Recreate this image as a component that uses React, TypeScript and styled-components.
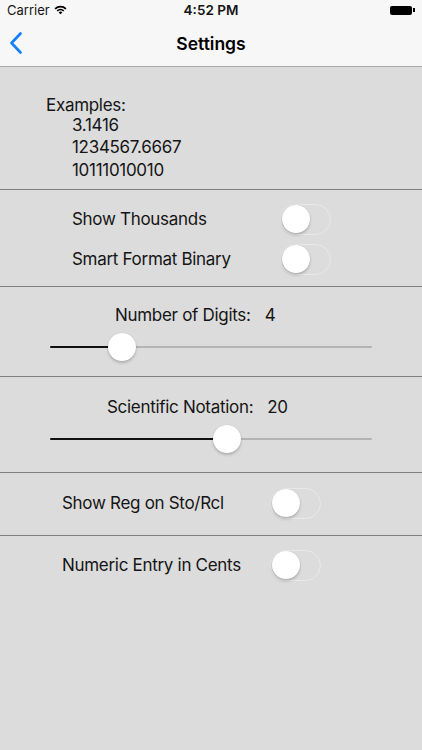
import React from "react";
import styled, { createGlobalStyle } from "styled-components";

const GlobalStyle = createGlobalStyle`
  html, body {
    margin: 0;
    padding: 0;
    background: #dcdcdc;
  }
  body {
    font-family: Inter, "Liberation Sans", sans-serif;
    color: #151515;
  }
`;

const Screen = styled.div`
  width: 422px;
  height: 750px;
  background: #dcdcdc;
  display: flex;
  flex-direction: column;
  overflow: hidden;
  letter-spacing: -0.3px;
`;

const Header = styled.div`
  background: #f7f7f7;
  border-bottom: 1px solid #a9a9a9;
  display: flex;
  flex-direction: column;
  letter-spacing: 0;
`;

const StatusBar = styled.div`
  height: 20px;
  display: grid;
  grid-template-columns: 1fr auto 1fr;
  align-items: center;
  padding: 0 7px;
  font-size: 13px;
`;

const Carrier = styled.div`
  display: flex;
  align-items: center;
  gap: 4px;
`;

const Clock = styled.div`
  font-weight: 600;
  font-size: 13.5px;
`;

const Battery = styled.div`
  justify-self: end;
  display: flex;
  align-items: center;
`;

const BatteryBody = styled.div`
  width: 22px;
  height: 9px;
  background: #000;
  border-radius: 2px;
`;

const BatteryTip = styled.div`
  width: 2px;
  height: 4px;
  background: #000;
  margin-left: 1px;
`;

const NavBar = styled.div`
  height: 46px;
  display: grid;
  grid-template-columns: 60px 1fr 60px;
  align-items: center;
`;

const Back = styled.div`
  padding-left: 9px;
  display: flex;
  align-items: center;
`;

const Title = styled.div`
  text-align: center;
  font-size: 17.5px;
  font-weight: 600;
  color: #000;
`;

const Section = styled.div<{ h: number }>`
  height: ${(p) => p.h}px;
  border-bottom: 1px solid #7e7e7e;
  box-sizing: border-box;
  display: flex;
  flex-direction: column;
`;

const Examples = styled.div`
  padding: 27px 0 0 46px;
  font-size: 17px;
  line-height: 22.5px;
`;

const ExampleLine = styled.div`
  padding-left: 26px;
`;

const Row = styled.div<{ indent: number; toggleAt: number }>`
  height: 40px;
  display: grid;
  grid-template-columns: ${(p) => p.toggleAt - p.indent}px 51px;
  align-items: center;
  padding-left: ${(p) => p.indent}px;
  font-size: 17px;
`;

const ToggleTrack = styled.div`
  width: 51px;
  height: 31px;
  box-sizing: border-box;
  border: 1.5px solid #e9e9e9;
  border-radius: 16px;
  display: flex;
  align-items: center;
  padding-left: 0.5px;
  margin-left: -1px;
`;

const Knob = styled.div`
  width: 28px;
  height: 28px;
  border-radius: 50%;
  background: #fff;
  box-shadow: 0 2px 3px rgba(0, 0, 0, 0.2), 0 0 1px rgba(0, 0, 0, 0.15);
`;

const SliderBlock = styled.div`
  display: flex;
  flex-direction: column;
  padding-left: 50px;
  font-size: 17px;
`;

const SliderLabel = styled.div<{ indent: number }>`
  height: 20px;
  line-height: 20px;
  display: flex;
  gap: 14px;
  padding-left: ${(p) => p.indent}px;
`;

const SliderTrack = styled.div`
  position: relative;
  width: 322px;
  height: 2px;
  background: #b4b4b4;
  border-radius: 1px;
`;

const SliderFill = styled.div`
  height: 2px;
  background: #111;
  border-radius: 1px;
`;

const SliderKnob = styled(Knob)`
  position: absolute;
  top: -13px;
  transform: translateX(-14px);
`;

function Toggle() {
  return (
    <ToggleTrack>
      <Knob />
    </ToggleTrack>
  );
}

function Slider({
  label,
  value,
  indent,
  pos,
  top,
  gap,
}: {
  label: string;
  value: string;
  indent: number;
  pos: number;
  top: number;
  gap: number;
}) {
  return (
    <SliderBlock style={{ paddingTop: top }}>
      <SliderLabel indent={indent}>
        <span>{label}</span>
        <span>{value}</span>
      </SliderLabel>
      <div style={{ height: gap }} />
      <SliderTrack>
        <SliderFill style={{ width: pos }} />
        <SliderKnob style={{ left: pos }} />
      </SliderTrack>
    </SliderBlock>
  );
}

export default function App() {
  return (
    <>
      <GlobalStyle />
      <Screen>
        <Header>
          <StatusBar>
            <Carrier>
              Carrier
              <svg width="13" height="10" viewBox="0 0 13 10">
                <path d="M0.5 3.3a8.5 8.5 0 0 1 12 0l-1.2 1.2a6.8 6.8 0 0 0-9.6 0z" fill="#000" />
                <path d="M2.6 5.4a5.5 5.5 0 0 1 7.8 0l-1.2 1.2a3.8 3.8 0 0 0-5.4 0z" fill="#000" />
                <path d="M4.7 7.5a2.5 2.5 0 0 1 3.6 0L6.5 9.3z" fill="#000" />
              </svg>
            </Carrier>
            <Clock>4:52 PM</Clock>
            <Battery>
              <BatteryBody />
              <BatteryTip />
            </Battery>
          </StatusBar>
          <NavBar>
            <Back>
              <svg width="14" height="22" viewBox="0 0 14 22">
                <path d="M11.5 1.5 2.5 11l9 9.5" fill="none" stroke="#147efb" strokeWidth="2.6" strokeLinecap="round" strokeLinejoin="round" />
              </svg>
            </Back>
            <Title>Settings</Title>
            <div />
          </NavBar>
        </Header>

        <Section h={123}>
          <Examples>
            Examples:
            <ExampleLine style={{ marginTop: -3 }}>3.1416</ExampleLine>
            <ExampleLine>1234567.6667</ExampleLine>
            <ExampleLine>10111010010</ExampleLine>
          </Examples>
        </Section>

        <Section h={97} style={{ paddingTop: 9 }}>
          <Row indent={72} toggleAt={281}>
            <span>Show Thousands</span>
            <Toggle />
          </Row>
          <Row indent={72} toggleAt={281}>
            <span>Smart Format Binary</span>
            <Toggle />
          </Row>
        </Section>

        <Section h={90}>
          <Slider label="Number of Digits:" value="4" indent={65} pos={72} top={18} gap={21} />
        </Section>

        <Section h={96}>
          <Slider label="Scientific Notation:" value="20" indent={57} pos={177} top={20} gap={21} />
        </Section>

        <Section h={63} style={{ paddingTop: 10 }}>
          <Row indent={62} toggleAt={271}>
            <span>Show Reg on Sto/Rcl</span>
            <Toggle />
          </Row>
        </Section>

        <Section h={70} style={{ paddingTop: 9, borderBottom: "none" }}>
          <Row indent={62} toggleAt={271}>
            <span>Numeric Entry in Cents</span>
            <Toggle />
          </Row>
        </Section>
      </Screen>
    </>
  );
}
